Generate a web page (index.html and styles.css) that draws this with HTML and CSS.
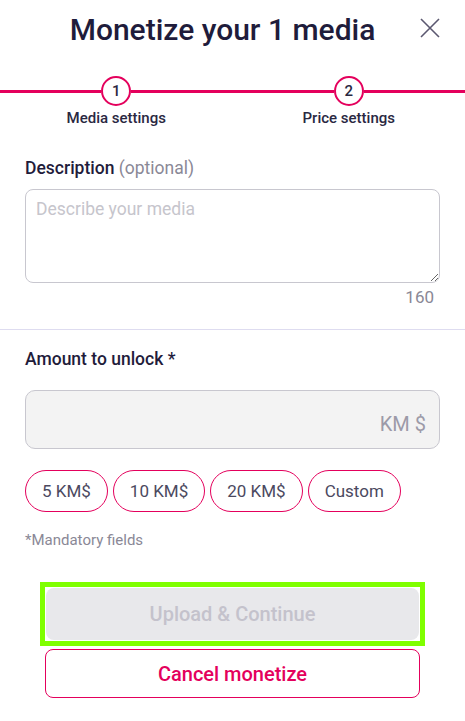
FILE: index.html
```html
<!DOCTYPE html>
<html lang="en">
<head>
  <meta charset="UTF-8">
  <meta name="viewport" content="width=device-width, initial-scale=1.0">
  <title>Monetize media</title>
  <link rel="stylesheet" href="styles.css">
</head>
<body>

  <div class="header">
    <h1 class="title">Monetize your 1 media</h1>
    <span class="close">
      <svg width="20" height="20" viewBox="0 0 20 20">
        <path d="M1 1 L19 19 M19 1 L1 19" stroke="#5b5870" stroke-width="1.6" fill="none"/>
      </svg>
    </span>
  </div>

  <div class="stepper">
    <div class="step">
      <div class="dot-row">
        <span class="seg"></span>
        <span class="dot">1</span>
        <span class="seg"></span>
      </div>
      <span class="step-label">Media settings</span>
    </div>
    <div class="step">
      <div class="dot-row">
        <span class="seg"></span>
        <span class="dot">2</span>
        <span class="seg"></span>
      </div>
      <span class="step-label">Price settings</span>
    </div>
  </div>

  <div class="section">
    <label class="label">Description <span class="muted">(optional)</span></label>
    <textarea class="desc" placeholder="Describe your media"></textarea>
    <div class="counter">160</div>
  </div>

  <div class="divider"></div>

  <div class="section">
    <label class="label label-amount">Amount to unlock *</label>
    <div class="amount">
      <span class="unit">KM $</span>
    </div>
    <div class="chips">
      <span class="chip">5 KM$</span>
      <span class="chip">10 KM$</span>
      <span class="chip">20 KM$</span>
      <span class="chip">Custom</span>
    </div>
    <p class="note">*Mandatory fields</p>

    <div class="focus-ring">
      <button class="btn btn-upload" disabled>Upload &amp; Continue</button>
    </div>
    <button class="btn btn-cancel">Cancel monetize</button>
  </div>

</body>
</html>
```

FILE: styles.css
```css
* {
  margin: 0;
  padding: 0;
  box-sizing: border-box;
}

body {
  font-family: Roboto, "Liberation Sans", sans-serif;
  color: #1f1c3b;
  background-color: #fff;
}

/* 头部 */
.header {
  display: flex;
  align-items: flex-start;
  padding: 0 25px;
  height: 60px;
}

.title {
  flex: 1;
  text-align: center;
  font-size: 30px;
  font-weight: 500;
  line-height: 34px;
  margin-top: 13px;
}

.close {
  width: 20px;
  height: 20px;
  margin-top: 18px;
  display: flex;
}

/* 步骤条 */
.stepper {
  display: flex;
  margin-top: 16px;
}

.step {
  flex: 1;
  display: flex;
  flex-direction: column;
  align-items: center;
}

.dot-row {
  width: 100%;
  display: flex;
  align-items: center;
}

.seg {
  flex: 1;
  height: 3px;
  background-color: #e4005c;
}

.dot {
  width: 30px;
  height: 30px;
  border: 2px solid #e4005c;
  border-radius: 50%;
  display: flex;
  justify-content: center;
  align-items: center;
  font-size: 15px;
  font-weight: 500;
  color: #2a2842;
}

.step-label {
  margin-top: 3px;
  line-height: 18px;
  font-size: 15px;
  font-weight: 500;
  color: #2a2842;
}

/* 表单 */
.section {
  padding: 0 25px;
}

.label {
  display: block;
  margin-top: 31px;
  font-size: 17.5px;
  font-weight: 500;
  line-height: 20px;
}

.muted {
  font-weight: 400;
  color: #8a8896;
}

.desc {
  display: block;
  width: 100%;
  height: 94px;
  margin-top: 11px;
  padding: 9px 10px;
  border: 1px solid #c8c7cf;
  border-radius: 8px;
  font-family: inherit;
  font-size: 17.5px;
  color: #1f1c3b;
  outline: none;
}

.desc::placeholder {
  color: #c6c5cc;
}

.counter {
  margin-top: 4px;
  padding-right: 6px;
  text-align: right;
  line-height: 20px;
  font-size: 17px;
  color: #8a8896;
}

.divider {
  height: 1px;
  margin-top: 22px;
  background-color: #dedcf0;
}

.label-amount {
  margin-top: 19px;
}

.amount {
  height: 59px;
  margin-top: 21px;
  padding-right: 13px;
  background-color: #f3f3f3;
  border: 1px solid #c8c7cf;
  border-radius: 10px;
  display: flex;
  justify-content: flex-end;
  align-items: center;
}

.unit {
  font-size: 20px;
  color: #9c9aa8;
  padding-top: 8px;
}

.chips {
  display: flex;
  gap: 5px;
  margin-top: 21px;
}

.chip {
  height: 42px;
  padding: 0 16px;
  border: 1.5px solid #e4005c;
  border-radius: 21px;
  display: flex;
  align-items: center;
  font-size: 17px;
  color: #4b4960;
}

.note {
  margin-top: 20px;
  line-height: 16px;
  font-size: 15px;
  color: #8a8896;
}

/* 按钮 */
.focus-ring {
  margin: 34px 15px 0;
  border: 5px solid #7fff00;
  padding: 1px;
}

.btn {
  display: block;
  width: 100%;
  font-family: inherit;
  font-size: 20px;
  font-weight: 500;
  border-radius: 8px;
  cursor: pointer;
}

.btn-upload {
  height: 52px;
  border: none;
  background-color: #e8e8eb;
  color: #c4c2cc;
  cursor: not-allowed;
}

.btn-cancel {
  margin: 3px 20px 0;
  width: calc(100% - 40px);
  height: 49px;
  border: 1px solid #e4005c;
  background-color: #fff;
  color: #e4005c;
}
```
